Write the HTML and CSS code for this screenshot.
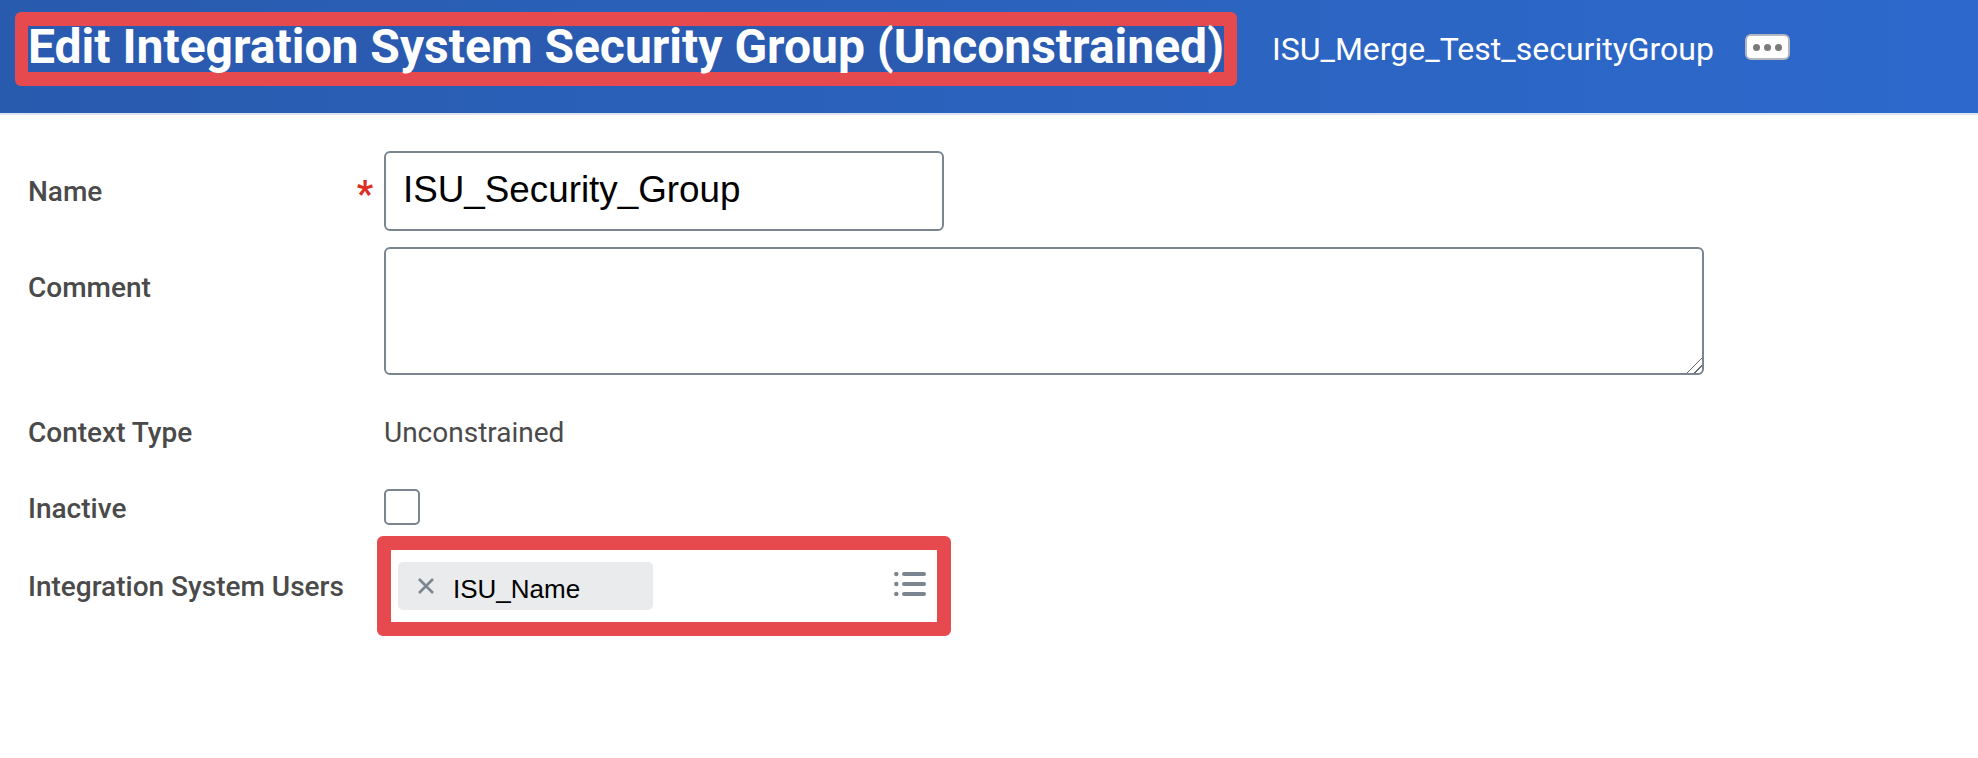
FILE: index.html
```html
<!DOCTYPE html>
<html lang="en">
<head>
    <meta charset="UTF-8">
    <title>Edit Integration System Security Group (Unconstrained)</title>
    <link rel="stylesheet" href="styles.css">
</head>
<body>
    <header class="page-header">
        <div class="title-frame">
            <h1 class="page-title">Edit Integration System Security Group (Unconstrained)</h1>
        </div>
        <span class="page-subtitle">ISU_Merge_Test_securityGroup</span>
        <button class="more-button" type="button" aria-label="More">
            <span class="dot"></span>
            <span class="dot"></span>
            <span class="dot"></span>
        </button>
    </header>

    <form class="edit-form">
        <div class="form-row row-name">
            <label class="field-label" for="name">Name <span class="required">*</span></label>
            <input class="text-input" type="text" id="name" value="ISU_Security_Group">
        </div>

        <div class="form-row row-comment">
            <label class="field-label" for="comment">Comment</label>
            <textarea class="comment-input" id="comment"></textarea>
        </div>

        <div class="form-row row-context">
            <span class="field-label">Context Type</span>
            <span class="field-value">Unconstrained</span>
        </div>

        <div class="form-row row-inactive">
            <label class="field-label" for="inactive">Inactive</label>
            <input class="check-input" type="checkbox" id="inactive">
        </div>

        <div class="form-row row-users">
            <span class="field-label">Integration System Users</span>
            <div class="users-frame">
                <div class="user-chip">
                    <svg class="chip-remove" width="20" height="20" viewBox="0 0 20 20">
                        <path d="M3 3 L17 17 M17 3 L3 17" stroke="#7b858f" stroke-width="2.6" fill="none"/>
                    </svg>
                    <span class="chip-text">ISU_Name</span>
                </div>
                <svg class="list-icon" width="32" height="24" viewBox="0 0 32 24">
                    <g fill="#7b858f">
                        <circle cx="2.3" cy="2" r="2.2"/>
                        <circle cx="2.3" cy="12" r="2.2"/>
                        <circle cx="2.3" cy="22" r="2.2"/>
                        <rect x="8" y="0" width="24" height="4" rx="2"/>
                        <rect x="8" y="10" width="24" height="4" rx="2"/>
                        <rect x="8" y="20" width="24" height="4" rx="2"/>
                    </g>
                </svg>
            </div>
        </div>
    </form>
</body>
</html>
```

FILE: styles.css
```css
* {
    box-sizing: border-box;
}

body {
    margin: 0;
    background-color: #fff;
    font-family: Roboto, sans-serif;
    color: #4a4a4a;
}

/* Header */
.page-header {
    display: flex;
    align-items: flex-start;
    height: 115px;
    padding: 12px 0 0 15px;
    background: linear-gradient(90deg, #285bae 0%, #2b62bd 50%, #2d69cc 100%);
    border-bottom: 2px solid #dce4f2;
}

.title-frame {
    height: 74px;
    padding: 14px 13px 0;
    background-color: #e64a4e;
    border-radius: 6px;
}

.page-title {
    margin: 0;
    height: 46px;
    padding: 0;
    background-color: #2a5bb0;
    color: #fff;
    font-size: 48px;
    font-weight: 700;
    line-height: 41px;
    white-space: nowrap;
}

.page-subtitle {
    margin: 19px 0 0 35px;
    color: #fff;
    font-size: 32px;
    line-height: 36px;
    white-space: nowrap;
}

.more-button {
    display: flex;
    align-items: center;
    justify-content: center;
    gap: 4px;
    width: 45px;
    height: 26px;
    margin: 22px 0 0 31px;
    padding: 0;
    background-color: #fff;
    border: 2px solid #b4b7bd;
    border-radius: 6px;
}

.dot {
    width: 7px;
    height: 7px;
    background-color: #7a7a7a;
    border-radius: 50%;
}

/* Form */
.edit-form {
    padding: 36px 0 0 28px;
}

.form-row {
    display: flex;
    align-items: center;
}

.field-label {
    display: flex;
    align-items: center;
    justify-content: space-between;
    flex: none;
    width: 356px;
    padding-right: 11px;
    font-size: 28px;
    font-weight: 500;
    color: #4a4a4a;
}

.required {
    color: #de2e21;
    font-size: 36px;
    font-weight: 700;
    line-height: 30px;
    height: 24px;
}

.text-input {
    width: 560px;
    height: 80px;
    padding: 0 17px 3px;
    border: 2px solid #7b858f;
    border-radius: 6px;
    outline: none;
    font-family: "Liberation Sans", Arial, sans-serif;
    font-size: 36.8px;
    color: #000;
}

.row-comment {
    align-items: flex-start;
    margin-top: 16px;
}

.row-comment .field-label {
    margin-top: 24px;
}

.comment-input {
    display: block;
    width: 1320px;
    height: 128px;
    border: 2px solid #7b858f;
    border-radius: 6px;
    outline: none;
    resize: both;
}

.comment-input::-webkit-resizer {
    background: linear-gradient(135deg, transparent 47%, #666 47%, #666 53%, transparent 53%, transparent 72%, #666 72%, #666 78%, transparent 78%);
}

.row-context {
    height: 30px;
    margin-top: 42px;
}

.field-value {
    font-size: 28px;
    color: #4a4a4a;
}

.row-inactive {
    height: 36px;
    margin-top: 42px;
}

.row-inactive .field-label {
    padding-top: 3px;
}

.check-input {
    width: 36px;
    height: 36px;
    margin: 0;
    appearance: none;
    background-color: #fff;
    border: 2px solid #7b858f;
    border-radius: 5px;
}

.row-users {
    margin-top: 11px;
}

.row-users .field-label {
    width: 349px;
    padding-right: 0;
}

.users-frame {
    display: flex;
    align-items: center;
    justify-content: space-between;
    width: 574px;
    height: 100px;
    padding: 0 11px 0 7px;
    background-color: #fff;
    border-width: 14px;
    border-style: solid;
    border-color: #e64a4e;
    border-radius: 6px;
}

.user-chip {
    display: flex;
    align-items: center;
    gap: 17px;
    width: 255px;
    height: 48px;
    padding-left: 18px;
    background-color: #e9ebed;
    border-radius: 5px;
}

.chip-remove {
    flex: none;
}

.chip-text {
    padding-top: 7px;
    font-family: "Liberation Sans", Arial, sans-serif;
    font-size: 26px;
    color: #000;
}

.list-icon {
    margin-bottom: 4px;
}
```
